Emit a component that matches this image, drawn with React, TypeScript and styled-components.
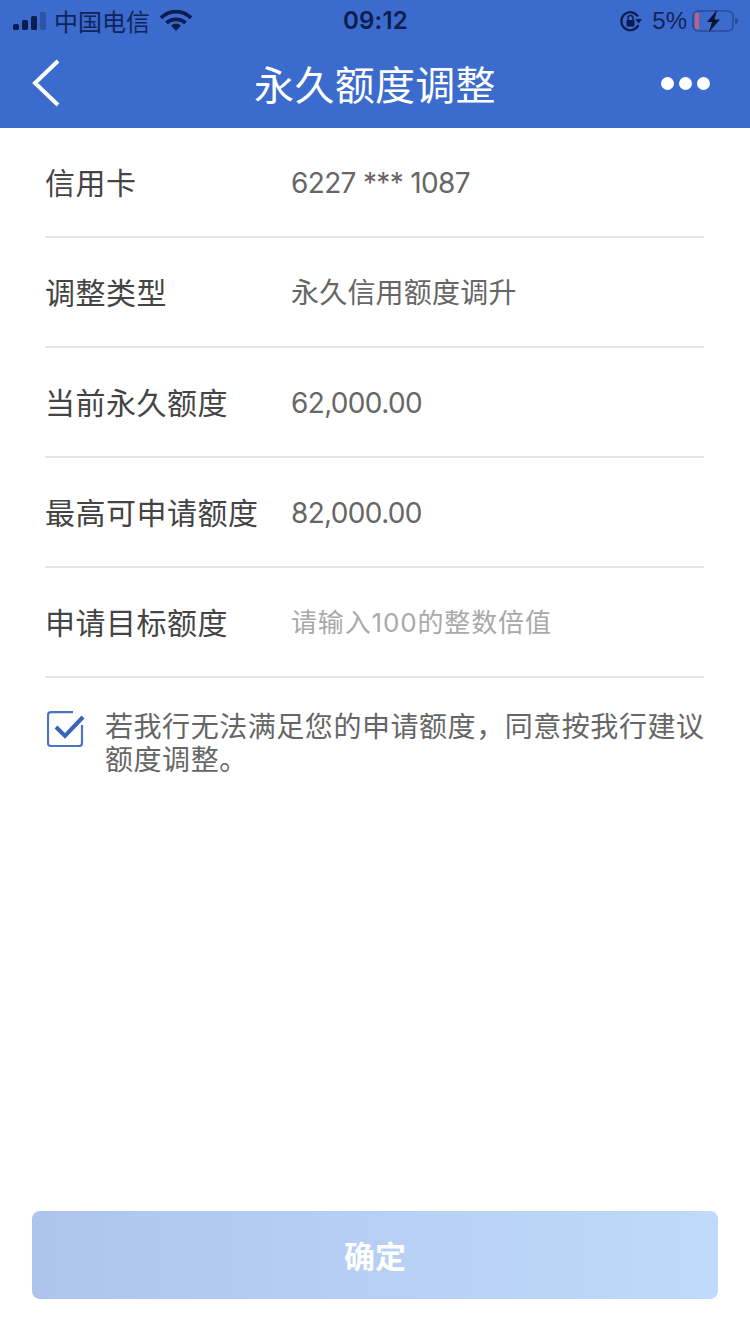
import React from "react";
import styled, { createGlobalStyle } from "styled-components";

const Global = createGlobalStyle`
  html, body { margin: 0; padding: 0; background: #fff; }
  * { box-sizing: border-box; }
`;
const CJK = `"Noto Sans CJK SC", "Noto Sans", sans-serif`;
const Page = styled.div`
  width: 750px; height: 1334px; display: flex; flex-direction: column;
  background: #fff; font-family: ${CJK}; overflow: hidden;
`;
const Header = styled.header`background: #3b6bcc; height: 128px; display: flex; flex-direction: column;`;
const StatusBar = styled.div`
  height: 40px; display: grid; grid-template-columns: 1fr auto 1fr; align-items: center;
  padding: 2px 12px 0 13px; color: #0e1d50;
`;
const StatusLeft = styled.div`display: flex; align-items: center; gap: 7px;`;
const StatusRight = styled.div`display: flex; align-items: center; justify-content: flex-end; gap: 6px;`;
const Carrier = styled.span`font-size: 24px; line-height: 30px; color: #12235c;`;
const Clock = styled.span`font: 600 24px/30px Inter, "Liberation Sans", sans-serif; letter-spacing: 0.2px; color: #0e1d50;`;
const Percent = styled.span`font: 400 24px/30px "Liberation Sans", Arial, sans-serif; color: #12235c;`;
const NavBar = styled.div`height: 88px; display: grid; grid-template-columns: 100px 1fr 100px; align-items: center; padding-bottom: 3px;`;
const Back = styled.div`padding-left: 31px; display: flex;`;
const Title = styled.h1`margin: 0; text-align: center; color: #fff; font-size: 40px; font-weight: 400; line-height: 56px; letter-spacing: 0.3px;`;
const Dots = styled.div`display: flex; justify-content: flex-end; gap: 5px; padding: 2px 40px 0 0;`;
const Dot = styled.i`width: 13px; height: 13px; border-radius: 50%; background: #fff; display: block;`;
const List = styled.div`padding: 0 46px 0 45px;`;
const Row = styled.div`height: 110px; display: flex; align-items: center; border-bottom: 2px solid #e6e6e6; padding-bottom: 2px;`;
const Label = styled.div`width: 246px; font-size: 30px; color: #444; line-height: 40px; flex: none; white-space: nowrap; letter-spacing: 0.5px;`;
const Value = styled.div<{ $kind: "number" | "text" | "hint" }>`
  line-height: 40px; padding-top: 4px;
  color: ${p => (p.$kind === "hint" ? "#a9a9a9" : "#666")};
  font-family: Inter, "Noto Sans CJK SC", sans-serif;
  font-size: ${p => (p.$kind === "hint" ? 26 : 28)}px;
  letter-spacing: ${p => (p.$kind === "number" ? -0.65 : p.$kind === "hint" ? 0.85 : 0.2)}px;
`;
const Agree = styled.div`display: flex; gap: 22px; padding: 31px 45px 0 47px;`;
const Box = styled.div`flex: none; width: 36px; height: 36px; margin-top: 2px;`;
const AgreeText = styled.p`margin: 0; font-size: 28px; line-height: 33px; letter-spacing: 0.55px; color: #666; width: 602px;`;
const Spacer = styled.div`flex: 1;`;
const Footer = styled.div`padding: 0 32px 35px;`;
const Confirm = styled.button`
  width: 100%; height: 88px; border: 0; border-radius: 8px; color: #fff;
  background: linear-gradient(90deg, #aec4ec 0%, #bfdafb 100%);
  font: 700 31px/40px ${CJK};
`;

const rows: [string, string, "number" | "text"][] = [
  ["信用卡", "6227 *** 1087", "number"],
  ["调整类型", "永久信用额度调升", "text"],
  ["当前永久额度", "62,000.00", "number"],
  ["最高可申请额度", "82,000.00", "number"],
];

export default function App() {
  return (
    <Page>
      <Global />
      <Header>
        <StatusBar>
          <StatusLeft>
            <svg width="34" height="20" viewBox="0 0 34 20">
              <rect x="0" y="13" width="6" height="6" rx="1.5" fill="#0e1d50" />
              <rect x="9" y="9" width="6" height="10" rx="1.5" fill="#0e1d50" />
              <rect x="18" y="5" width="6" height="14" rx="1.5" fill="#0e1d50" />
              <rect x="27" y="1" width="6" height="18" rx="1.5" fill="#0e1d50" opacity=".3" />
            </svg>
            <Carrier>中国电信</Carrier>
            <svg width="32" height="22" viewBox="0 0 32 22" style={{ marginLeft: 3 }}>
              <path d="M1 8 A21 21 0 0 1 31 8" fill="none" stroke="#0e1d50" strokeWidth="3.8" />
              <path d="M6.5 13 A14 14 0 0 1 25.5 13" fill="none" stroke="#0e1d50" strokeWidth="3.8" />
              <path d="M11 15.5 A8 8 0 0 1 21 15.5 L16 21 Z" fill="#0e1d50" />
            </svg>
          </StatusLeft>
          <Clock>09:12</Clock>
          <StatusRight>
            <svg width="24" height="24" viewBox="0 0 24 24" style={{ marginRight: 3 }}>
              <path d="M19 7.5 A9 9 0 1 0 19.5 16" fill="none" stroke="#0e1d50" strokeWidth="2.2" />
              <path d="M16.5 10 L23 10 L19.5 14.5 Z" fill="#0e1d50" />
              <rect x="7.5" y="11" width="8" height="6.5" rx="1" fill="#0e1d50" />
              <path d="M9 11 V9 a2.5 2.5 0 0 1 5 0 V11" fill="none" stroke="#0e1d50" strokeWidth="1.4" />
            </svg>
            <Percent>5%</Percent>
            <svg width="46" height="24" viewBox="0 0 46 24" style={{ marginLeft: -1 }}>
              <rect x="1" y="2" width="40" height="20" rx="5" fill="none" stroke="#2a4a9c" strokeWidth="1.6" />
              <rect x="3" y="4" width="4" height="16" rx="1" fill="#c4607f" />
              <path d="M43 9 a3 3 0 0 1 0 6 Z" fill="#2a4a9c" />
              <path d="M25 1 L15 13 L20 13 L17 23 L28 10.5 L22.5 10.5 Z" fill="#0b1430" />
            </svg>
          </StatusRight>
        </StatusBar>
        <NavBar>
          <Back>
            <svg width="30" height="50" viewBox="0 0 30 50">
              <path d="M27 3 L4 25 L27 47" fill="none" stroke="#fff" strokeWidth="4" />
            </svg>
          </Back>
          <Title>永久额度调整</Title>
          <Dots><Dot /><Dot /><Dot /></Dots>
        </NavBar>
      </Header>
      <List>
        {rows.map(([l, v, k]) => (
          <Row key={l}>
            <Label>{l}</Label>
            <Value $kind={k}>{v}</Value>
          </Row>
        ))}
        <Row>
          <Label>申请目标额度</Label>
          <Value $kind="hint">请输入100的整数倍值</Value>
        </Row>
      </List>
      <Agree>
        <Box>
          <svg width="38" height="36" viewBox="0 0 38 36">
            <path d="M26 1.2 H4 a3 3 0 0 0 -3 3 V32 a3 3 0 0 0 3 3 H32 a3 3 0 0 0 3 -3 V14" fill="none" stroke="#4a74c4" strokeWidth="2.2" />
            <path d="M9 16 L18 25 L36 6" fill="none" stroke="#3a62b6" strokeWidth="4" />
          </svg>
        </Box>
        <AgreeText>若我行无法满足您的申请额度，同意按我行建议额度调整。</AgreeText>
      </Agree>
      <Spacer />
      <Footer>
        <Confirm>确定</Confirm>
      </Footer>
    </Page>
  );
}
